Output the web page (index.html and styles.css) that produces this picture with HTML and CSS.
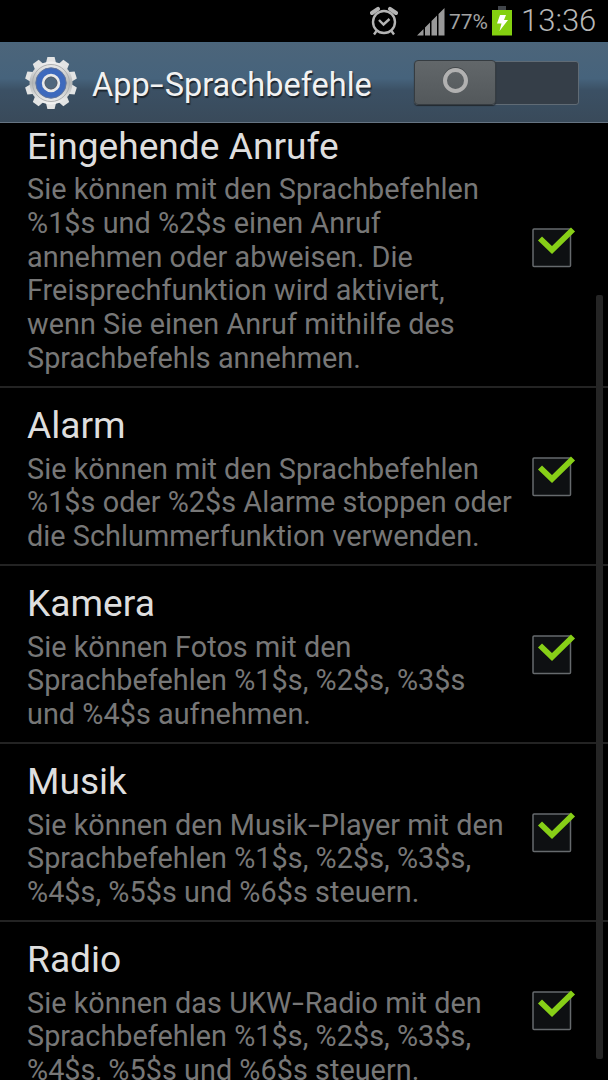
FILE: index.html
```html
<!DOCTYPE html>
<html lang="de">
<head>
<meta charset="utf-8">
<title>App-Sprachbefehle</title>
<link rel="stylesheet" href="styles.css">
</head>
<body>
<svg class="defs" width="0" height="0">
  <symbol id="check" viewBox="0 0 44 42">
    <rect x="1" y="3" width="37.500" height="37.500" rx="1" fill="#0e1012" stroke="#666a6d" stroke-width="1.500"/>
    <path d="M8 12.500 L20 24 L41 3.500" fill="none" stroke="#87cf17" stroke-width="5.800"/>
  </symbol>
</svg>
<div class="statusbar">
  <svg class="alarm" width="28" height="30" viewBox="0 0 28 30" fill="none" stroke="#b4b4b4">
    <circle cx="14" cy="16" r="11" stroke-width="2.400"/>
    <path d="M9 14 L13.500 18.500 L19.500 13" stroke-width="2.400"/>
    <path d="M2 7 L8 2.800 M20 2.800 L26 7" stroke-width="4" stroke-linecap="round"/>
    <path d="M6.500 25 L4 28.500 M21.500 25 L24 28.500" stroke-width="2.400"/>
  </svg>
  <svg class="signal" width="28" height="28" viewBox="0 0 28 28" fill="#999">
    <path d="M0 27.500 L6.500 21 V27.500Z M8 19.500 L13 14.500 V27.500 H8Z M14.500 13 L20 7.500 V27.500 H14.500Z M21.500 6 L27.500 0 V27.500 H21.500Z"/>
  </svg>
  <span class="percent">77%</span>
  <svg class="battery" width="20" height="30" viewBox="0 0 20 30">
    <rect x="6" y="0" width="8" height="4" fill="#41454a"/>
    <rect x="0" y="4" width="20" height="25.500" fill="#84d010"/>
    <path d="M8 9 H14 L12 14 H16 L7.500 25 L9.500 17.500 H5Z" fill="#fff"/>
  </svg>
  <span class="clock">13:36</span>
</div>
<header class="header">
  <svg class="gear" width="52" height="54" viewBox="-26 -27 52 54">
    <defs>
      <linearGradient id="metal" x1="0" y1="0" x2="0" y2="1">
        <stop offset="0" stop-color="#f2f2f2"/><stop offset=".5" stop-color="#b4b7b8"/><stop offset="1" stop-color="#f4f4f4"/>
      </linearGradient>
      <path id="tooth" d="M-5.500 -18 L-3.600 -26 H3.600 L5.500 -18Z"/>
    </defs>
    <g fill="#e3e4e4">
      <use href="#tooth"/><use href="#tooth" transform="rotate(36)"/><use href="#tooth" transform="rotate(72)"/><use href="#tooth" transform="rotate(108)"/><use href="#tooth" transform="rotate(144)"/><use href="#tooth" transform="rotate(180)"/><use href="#tooth" transform="rotate(216)"/><use href="#tooth" transform="rotate(252)"/><use href="#tooth" transform="rotate(288)"/><use href="#tooth" transform="rotate(324)"/>
    </g>
    <circle r="21.500" fill="url(#metal)"/>
    <circle r="18.500" fill="none" stroke="#aeb0b1"/>
    <circle r="15.200" fill="#3d69bd" stroke="#61759c"/>
    <circle r="7.700" fill="#50677d" stroke="#e8e8e8" stroke-width="3"/>
    <circle r="6" fill="none" stroke="#555d68" stroke-width="1"/>
  </svg>
  <h1 class="heading">App<span class="hyphen">-</span>Sprachbefehle</h1>
  <div class="switch"><div class="thumb"><div class="ring"></div></div></div>
</header>
<main class="list">
  <section class="row">
    <div class="text"><h2 class="title">Eingehende Anrufe</h2>
    <p class="desc">Sie können mit den Sprachbefehlen<br>%1$s und %2$s einen Anruf<br>annehmen oder abweisen. Die<br>Freisprechfunktion wird aktiviert,<br>wenn Sie einen Anruf mithilfe des<br>Sprachbefehls annehmen.</p></div>
    <svg class="check"><use href="#check"/></svg>
  </section>
  <section class="row">
    <div class="text"><h2 class="title">Alarm</h2>
    <p class="desc">Sie können mit den Sprachbefehlen<br>%1$s oder %2$s Alarme stoppen oder<br>die Schlummerfunktion verwenden.</p></div>
    <svg class="check"><use href="#check"/></svg>
  </section>
  <section class="row">
    <div class="text"><h2 class="title">Kamera</h2>
    <p class="desc">Sie können Fotos mit den<br>Sprachbefehlen %1$s, %2$s, %3$s<br>und %4$s aufnehmen.</p></div>
    <svg class="check"><use href="#check"/></svg>
  </section>
  <section class="row">
    <div class="text"><h2 class="title">Musik</h2>
    <p class="desc">Sie können den Musik<span class="hyphen">-</span>Player mit den<br>Sprachbefehlen %1$s, %2$s, %3$s,<br>%4$s, %5$s und %6$s steuern.</p></div>
    <svg class="check"><use href="#check"/></svg>
  </section>
  <section class="row">
    <div class="text"><h2 class="title">Radio</h2>
    <p class="desc">Sie können das UKW<span class="hyphen">-</span>Radio mit den<br>Sprachbefehlen %1$s, %2$s, %3$s,<br>%4$s, %5$s und %6$s steuern.</p></div>
    <svg class="check"><use href="#check"/></svg>
  </section>
  <div class="scrollbar"></div>
</main>
</body>
</html>
```
FILE: styles.css
```css
* { box-sizing: border-box; }
body {
  margin: 0;
  height: 1080px;
  display: flex;
  flex-direction: column;
  overflow: hidden;
  background: #000;
  font-family: Roboto, sans-serif;
}
.defs { position: absolute; }
.statusbar {
  height: 42px;
  flex: none;
  display: flex;
  align-items: flex-start;
  padding: 6px 12px 0 0;
  justify-content: flex-end;
  color: #a3a3a3;
}
.alarm { margin-right: 19px; }
.signal { margin: 2px 4px 0 0; }
.percent { width: 38px; margin-right: 5px; font-size: 21px; line-height: 32px; white-space: nowrap; }
.clock { width: 75px; margin: -1px 0 0 9px; font-size: 31px; line-height: 32px; font-weight: 300; color: #b8b8b8; white-space: nowrap; }
.header {
  height: 81px;
  flex: none;
  display: flex;
  align-items: center;
  padding: 0 29px 0 25px;
  border-top: 1px solid #49677f;
  border-bottom: 1px solid #667482;
  background: linear-gradient(#4c657a, #46637c 45%, #3b5064 60%, #394a5a);
}
.heading {
  flex: 1;
  margin: 4px 0 0 15px;
  font-size: 32.500px;
  line-height: 40px;
  font-weight: 400;
  color: #f2f2f2;
  text-shadow: 1px 2px 1px #1c252e;
  white-space: nowrap;
}
.hyphen {
  display: inline-block;
  width: 0.46em;
  transform: scaleX(1.5);
  transform-origin: left center;
}
.switch {
  width: 165px;
  height: 44px;
  border: 1px solid #606b75;
  border-radius: 3px;
  background: #353e48;
}
.thumb {
  width: 82px;
  height: 45px;
  margin: -2px 0 0 -1px;
  display: flex;
  align-items: center;
  justify-content: center;
  border: 1px solid #363c41;
  border-radius: 4px;
  background: linear-gradient(#62676a, #53585b);
  box-shadow: 0 1px 1px #22282e;
}
.ring { width: 25px; height: 25px; margin-top: -3px; border: 4px solid #b1b1b1; border-radius: 50%; box-shadow: 0 -1px #45494c; }
.list { position: relative; flex: 1; min-height: 0; overflow: hidden; }
.row {
  display: flex;
  align-items: center;
  justify-content: space-between;
  height: 178px;
  padding: 16px 32px 10px 27px;
  border-bottom: 2px solid #232323;
}
.row:first-child { height: 280px; margin-top: -15px; }
.title { margin: 0 0 4.700px; font-size: 37.150px; line-height: 44px; font-weight: 400; color: #dedede; }
.row:first-child .title { padding-top: 1px; margin-bottom: 4px; }
.desc { margin: 0; font-size: 28.800px; line-height: 33.750px; letter-spacing: 0.040px; color: #777; white-space: nowrap; }
.text { align-self: flex-start; width: 490px; }
.check { width: 44px; height: 42px; flex: none; margin-top: -6px; }
.scrollbar {
  position: absolute;
  right: 5px;
  top: 172px;
  width: 7px;
  height: 764px;
  border-radius: 2px;
  background: #252525;
}
```
